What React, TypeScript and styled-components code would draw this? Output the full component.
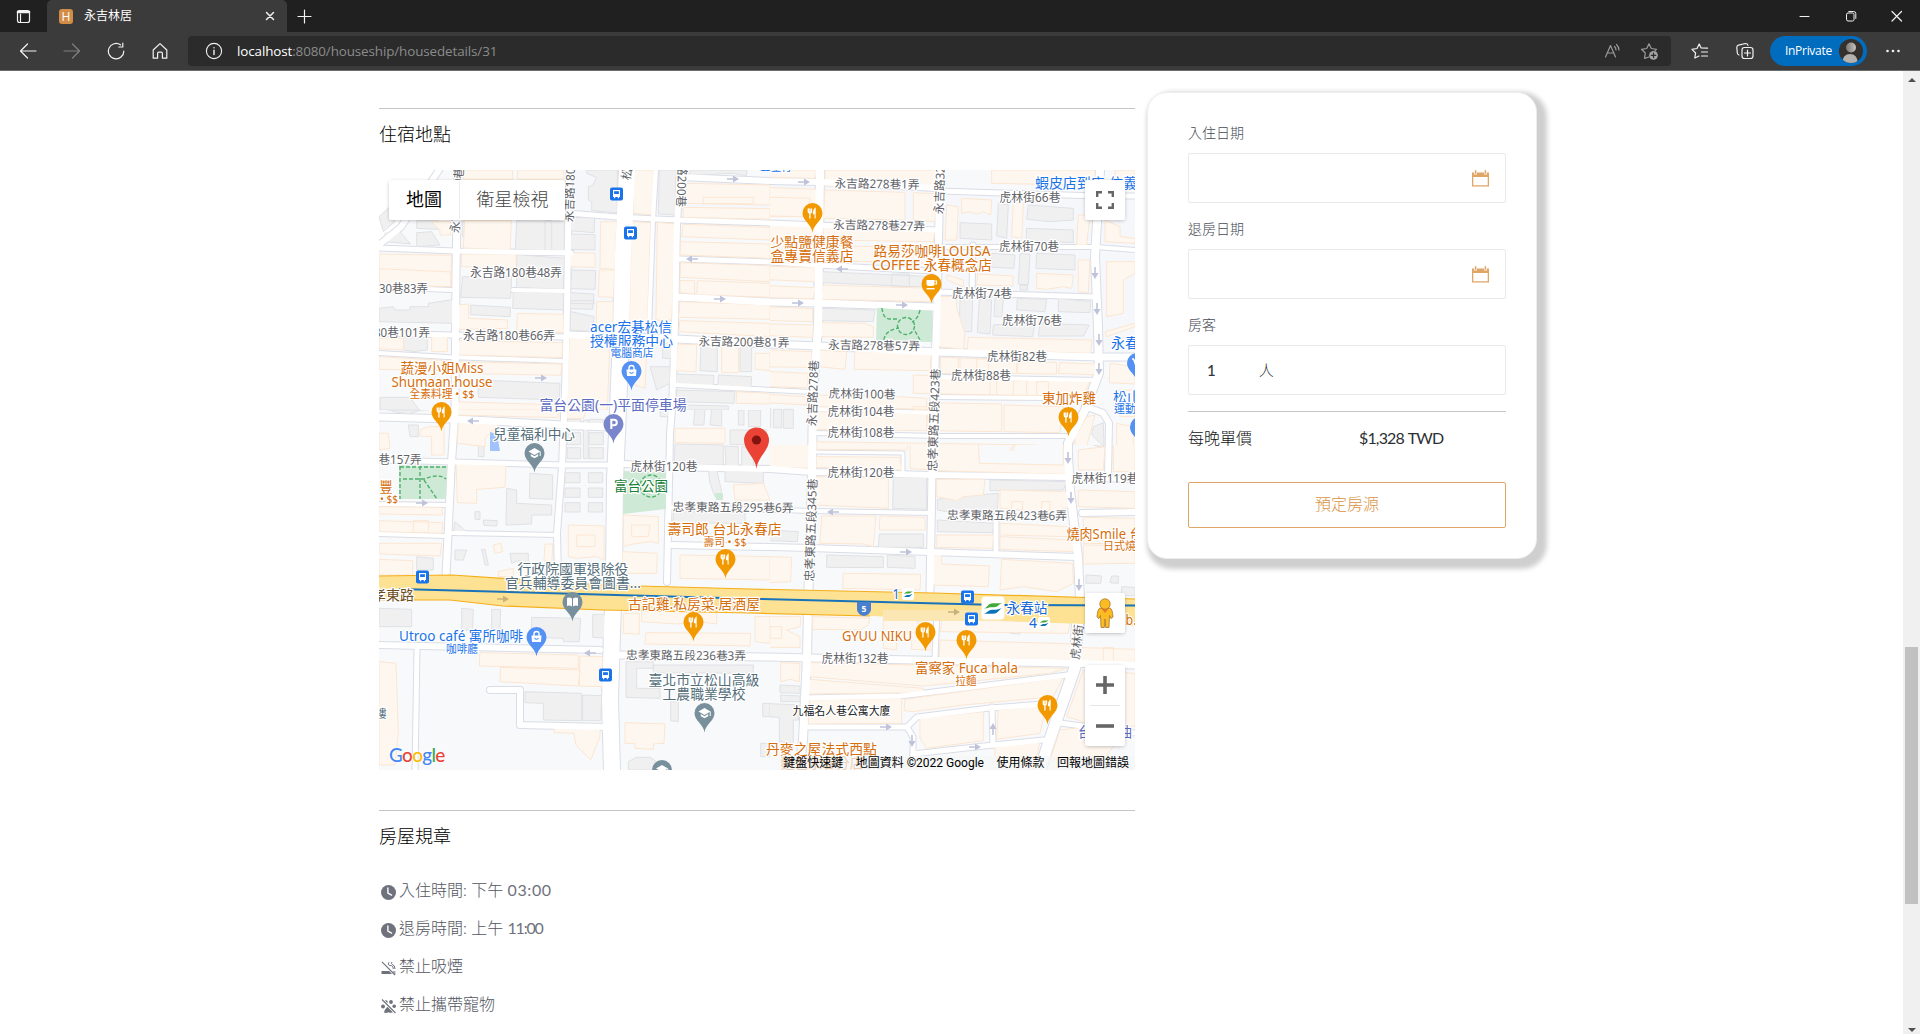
import React from "react";
import styled, { createGlobalStyle, css } from "styled-components";

const GlobalStyle = createGlobalStyle`
  * { box-sizing: border-box; }
  html, body { margin: 0; padding: 0; background: #fff; overflow: hidden; }
`;

const uiFont = `"Open Sans", "Noto Sans CJK TC", sans-serif`;
const pageFont = `Lato, "Noto Sans CJK TC", sans-serif`;

/* ---------- browser frame ---------- */

const Window = styled.div`
  width: 1920px;
  height: 1034px;
  display: flex;
  flex-direction: column;
  background: #fff;
  font-family: ${pageFont};
`;
const TabStrip = styled.div`
  height: 32px;
  flex: none;
  display: flex;
  align-items: center;
  background: #202020;
  color: #fff;
`;
const TabMenu = styled.div`
  width: 47px;
  display: flex;
  justify-content: center;
`;
const Tab = styled.div`
  width: 240px;
  height: 32px;
  padding: 0 10px 0 12px;
  display: flex;
  align-items: center;
  background: #3b3b3b;
  border-radius: 5px 5px 0 0;
  font: 400 12px/16px ${uiFont};
`;
const Favicon = styled.span`
  width: 14px;
  height: 15px;
  margin-right: 11px;
  border-radius: 3px;
  background: #d48d46;
  color: #fff;
  font: 400 12px/15px ${uiFont};
  text-align: center;
`;
const TabTitle = styled.span`
  flex: 1;
`;
const Controls = styled.div`
  margin-left: auto;
  display: flex;
`;
const ControlCell = styled.div`
  width: 46px;
  display: flex;
  justify-content: center;
`;
const Toolbar = styled.div`
  height: 39px;
  flex: none;
  display: flex;
  align-items: center;
  background: #3b3b3b;
  border-bottom: 1px solid #6e6b6d;
  padding: 0 5px 1px 6px;
`;
const ToolCell = styled.div<{ $w?: number }>`
  width: ${(p) => p.$w ?? 44}px;
  flex: none;
  display: flex;
  justify-content: center;
`;
const AddressBar = styled.div`
  width: 1483px;
  height: 30px;
  flex: none;
  margin-left: 6px;
  padding: 0 4px 0 8px;
  display: flex;
  align-items: center;
  background: #2b2b2b;
  border-radius: 4px;
`;
const Url = styled.div`
  flex: 1;
  margin-left: 5px;
  color: #8c8c8c;
  font: 400 13.4px/20px ${uiFont};
  letter-spacing: -0.1px;
  b { color: #fff; font-weight: 400; }
`;
const PrivatePill = styled.div`
  width: 97px;
  height: 30px;
  flex: none;
  margin: 0 2px 0 4px;
  padding: 0 4px 0 15px;
  display: flex;
  align-items: center;
  justify-content: space-between;
  border-radius: 15px;
  background: #006cbe;
  color: #fff;
  font: 400 12px/16px ${uiFont};
  letter-spacing: -0.3px;
`;

const Viewport = styled.div`
  flex: 1;
  min-height: 0;
  display: flex;
`;
const Page = styled.main`
  flex: 1;
  display: flex;
  align-items: flex-start;
  gap: 12px;
  padding-left: 379px;
  overflow: hidden;
`;
const Scrollbar = styled.div`
  width: 17px;
  display: flex;
  flex-direction: column;
  align-items: center;
  background: #f0f0f0;
`;
const ScrollArrow = styled.div<{ $down?: boolean }>`
  width: 0;
  height: 0;
  margin: ${(p) => (p.$down ? "auto 0 2px" : "7px 0 0")};
  border: 4px solid transparent;
  ${(p) =>
    p.$down
      ? css`border-top-color: #505050; border-bottom: 0;`
      : css`border-bottom-color: #505050; border-top: 0;`}
`;
const ScrollThumb = styled.div`
  width: 13px;
  height: 257px;
  margin-top: 565px;
  background: #c1c1c1;
`;

/* ---------- page ---------- */

const Details = styled.section`
  width: 756px;
  flex: none;
`;
const Rule = styled.hr<{ $top: number }>`
  height: 1px;
  margin: ${(p) => p.$top}px 0 0;
  border: 0;
  background: #c6c6c6;
`;
const Heading = styled.h2`
  margin: 12px 0 0;
  font: 300 18px/27px ${pageFont};
  color: #000;
`;
const RuleList = styled.ul`
  list-style: none;
  margin: 21px 0 0;
  padding: 0;
`;
const RuleItem = styled.li`
  height: 38px;
  display: flex;
  align-items: center;
  color: #53565f;
  font: 300 16px/24px ${pageFont};
  svg { flex: none; margin: 4px 3px 0 2px; }
`;
const Time = styled.span<{ $track: number }>`
  font-weight: 400;
  color: #6f727c;
  letter-spacing: ${(p) => p.$track}px;
`;

const Card = styled.aside`
  width: 390px;
  height: 467px;
  flex: none;
  margin-top: 21px;
  padding: 27px 30px 0 40px;
  border: 1px solid #ededed;
  border-radius: 20px;
  background: #fff;
  box-shadow: 5px 5px 5px 5px #cfcfcf;
`;
const FieldLabel = styled.label`
  display: block;
  height: 32px;
  padding-bottom: 1px;
  font: 300 14px/23px ${pageFont};
  color: #484b54;
`;
const Field = styled.div`
  height: 50px;
  margin-bottom: 14px;
  padding: 0 16px 0 18px;
  display: flex;
  align-items: center;
  border: 1px solid #e9e9ea;
  border-radius: 2px;
  color: #33363b;
  font: 500 15px/24px ${pageFont};
  svg { margin-left: auto; }
`;
const Unit = styled.span`
  margin-left: 43px;
  font-weight: 300;
`;
const Fields = styled.div`
  padding-top: 1px;
`;
const PriceRow = styled.div`
  display: grid;
  grid-template-columns: 171px 1fr;
  margin-top: 14px;
  font: 300 16px/24px ${pageFont};
  color: #101214;
  span { font-weight: 400; letter-spacing: -0.85px; color: #2b2f33; word-spacing: 1px; }
`;
const BookButton = styled.button`
  display: block;
  width: 100%;
  height: 46px;
  margin-top: 32px;
  padding: 0 0 3px;
  border: 1px solid #dfa667;
  border-radius: 2px;
  background: #fff;
  color: #d99243;
  font: 300 16px/24px ${pageFont};
`;

/* ---------- map ---------- */

const MapBox = styled.div`
  position: relative;
  width: 756px;
  height: 600px;
  margin-top: 22px;
  overflow: hidden;
  font-family: Roboto, "Noto Sans CJK TC", sans-serif;
`;
const MapSvg = styled.svg`
  display: block;
`;
const MapText = styled.text`
  font-family: "Noto Sans", "Noto Sans CJK TC", sans-serif;
  text-anchor: middle;
  paint-order: stroke;
  stroke: #fff;
  stroke-width: 2.5px;
  stroke-linejoin: round;
`;
const Overlay = styled.div<{ $x: number; $y: number; $w: number; $h: number }>`
  position: absolute;
  left: ${(p) => p.$x}px;
  top: ${(p) => p.$y}px;
  width: ${(p) => p.$w}px;
  height: ${(p) => p.$h}px;
  display: flex;
  align-items: center;
  justify-content: center;
  background: #fff;
  border-radius: 2px;
  box-shadow: 0 1px 4px -1px rgba(0, 0, 0, 0.35);
`;
const MapType = styled.div<{ $on?: boolean; $w: number }>`
  width: ${(p) => p.$w}px;
  font-size: 18px;
  line-height: 38px;
  text-align: center;
  font-weight: ${(p) => (p.$on ? 400 : 300)};
  color: ${(p) => (p.$on ? "#000" : "#454545")};
  & + & { border-left: 1px solid #ececec; }
`;
const ZoomStack = styled.div`
  display: flex;
  flex-direction: column;
  align-items: center;
  div { height: 40px; display: flex; align-items: center; }
  hr { width: 30px; height: 1px; margin: 0; border: 0; background: #e6e6e6; }
`;
const GoogleMark = styled.div`
  position: absolute;
  left: 10px;
  bottom: 2px;
  font: 500 19px/26px Lato, sans-serif;
  letter-spacing: -0.7px;
  text-shadow: 0 0 2px #fff, 0 0 2px #fff;
`;
const Letter = styled.span<{ $c: string }>`
  color: ${(p) => p.$c};
`;
const Attribution = styled.div`
  position: absolute;
  right: 0;
  bottom: 0;
  height: 14px;
  padding: 0 6px 0 5px;
  display: flex;
  gap: 12.5px;
  background: rgba(245, 245, 245, 0.72);
  color: #000;
  font-size: 12px;
  line-height: 14px;
  white-space: nowrap;
`;

type Shape = number[];
const toPath = (s: Shape) => {
  if (s.length === 4) return `M${s[0]} ${s[1]}H${s[2]}V${s[3]}H${s[0]}z`;
  let d = `M${s[0]} ${s[1]}`;
  for (let i = 2; i < s.length; i += 2) d += `L${s[i]} ${s[i + 1]}`;
  return d + "z";
};
const paths = (list: Shape[]) => list.map(toPath).join("");

/* Streets: width followed by the polyline's points */
const streets: Shape[] = [
  [7, 79, 0, 77, 100, 76, 240, 72, 300, 69, 365, 67, 405],
  [6, 190, 0, 188, 140, 186, 220, 183, 297, 178, 363, 179, 406],
  [16, 248, 0, 244, 87, 242, 165, 239, 240, 236, 310, 235, 410, 233, 463, 231, 530, 233, 600],
  [4, 277, 0, 274, 50, 270, 160],
  [6, 301, 0, 298, 55, 296, 155, 293, 240, 291, 263, 289, 363, 288, 412],
  [8, 441, 0, 439, 157, 434, 223, 433, 303, 429, 437, 428, 487, 424, 570, 420, 600],
  [7, 561, 0, 558, 140, 555, 223, 553, 303, 551, 420],
  [5, 558, 440, 556, 488],
  [8, 721, 0, 716, 87, 719, 157, 720, 203, 706, 240, 689, 273, 689, 287, 691, 320, 699, 387, 701, 430],
  [11, 699, 446, 696, 497, 681, 540, 668, 578, 660, 604],
  [5, 594, 75, 593, 125],
  [6, 706, 236, 724, 243, 730, 253, 729, 308],
  [5, 617, 345, 617, 384],
  [5, 0, 78, 76, 81, 192, 83],
  [5, 188, 43, 238, 47, 298, 50, 391, 53, 558, 60],
  [6, 301, 7, 391, 11, 441, 12, 558, 18],
  [5, 560, 21, 720, 26, 756, 26],
  [4, 134, 120, 186, 121],
  [4, 0, 117, 72, 120],
  [5, 301, 89, 391, 92, 437, 95, 554, 101],
  [7, 298, 127, 391, 132, 437, 133, 554, 137],
  [5, 0, 163, 71, 165, 186, 167],
  [7, 191, 165, 298, 169, 391, 174, 439, 176, 558, 182, 718, 187, 756, 187],
  [4, 0, 183, 68, 187, 184, 191],
  [7, 0, 247, 74, 249, 184, 255, 228, 257],
  [5, 0, 290, 75, 292, 183, 295, 228, 295],
  [6, 246, 294, 288, 297, 391, 299, 433, 302, 554, 305, 688, 307, 756, 309],
  [4, 0, 334, 69, 335],
  [4, 73, 363, 178, 365],
  [4, 0, 364, 66, 366],
  [4, 290, 337, 433, 341, 554, 343],
  [6, 703, 343, 756, 342],
  [6, 293, 375, 391, 377, 431, 378, 551, 382, 698, 387],
  [6, 0, 475, 221, 480],
  [7, 239, 485, 391, 487, 431, 488, 688, 493, 756, 495],
  [5, 424, 528, 521, 526, 554, 522, 688, 505],
  [5, 428, 557, 528, 557, 538, 547, 611, 538, 678, 533],
  [5, 528, 557, 534, 567, 534, 600],
  [5, 534, 584, 614, 575, 664, 570],
  [5, 613, 537, 614, 575],
  [5, 681, 553, 756, 563],
  [5, 38, 478, 36, 604],
  [6, 111, 520, 141, 520, 141, 555, 228, 557],
  [4, 568, 77, 717, 77, 756, 80],
  [5, 558, 122, 716, 127],
  [4, 561, 207, 719, 210],
  [4, 297, 215, 433, 222],
  [4, 434, 239, 556, 243],
  [4, 434, 263, 558, 266, 688, 266],
  [4, 558, 227, 678, 228],
  [3, 434, 282, 524, 283, 524, 303],
  [6, 0, 75, 22, 57, 60, 0],
];

interface Tile { at: string; clip: Shape; peach: Shape[]; gray: Shape[]; }

/* Building footprints, drawn per quadrant at three units to the pixel */
const tiles: Tile[] = [
  {
    at: "translate(-9 -80) scale(.33333)",
    clip: [27, 240, 1200, 960],
    peach: [
      [280, 240, 428, 240, 428, 268, 280, 268], [443, 240, 580, 240, 580, 268, 443, 268],
      [284, 392, 424, 392, 420, 480, 280, 474], [27, 492, 244, 496, 242, 590, 27, 586], [27, 536, 244, 546, 242, 590, 27, 586],
      [275, 492, 438, 492, 438, 535, 275, 530], [185, 395, 242, 395, 242, 435, 210, 435, 210, 420],
      [263, 645, 296, 642, 296, 685, 413, 690, 413, 715, 263, 718], [442, 670, 580, 673, 580, 728, 440, 720],
      [262, 752, 578, 758, 576, 803, 262, 795], [27, 745, 100, 745, 100, 780, 27, 776], [185, 740, 232, 785],
      [27, 800, 232, 812, 232, 842, 27, 838], [262, 815, 576, 822, 572, 856, 262, 850],
      [600, 488, 675, 490, 675, 532, 600, 530], [692, 395, 740, 395, 735, 538, 690, 535], [688, 540, 735, 540, 730, 622, 685, 620],
      [680, 635, 730, 635, 728, 735, 678, 730], [598, 745, 720, 748, 712, 960, 590, 960],
      [790, 240, 858, 240, 855, 375, 790, 370], [785, 395, 842, 398, 832, 700, 778, 700], [862, 397, 918, 402, 905, 690, 858, 690],
      [950, 280, 1200, 285, 1200, 345, 945, 340], [940, 352, 1200, 356, 1200, 388, 940, 382], [1000, 322, 1150, 322, 1150, 342, 1000, 340],
      [940, 403, 1200, 412, 1200, 450, 935, 440], [932, 455, 1200, 462, 1200, 505, 930, 495], [932, 518, 1200, 527, 1200, 575, 930, 562],
      [930, 572, 974, 572, 974, 612, 930, 608], [982, 572, 1200, 580, 1200, 622, 980, 614], [930, 635, 1200, 645, 1200, 688, 926, 682],
      [930, 692, 1200, 700, 1200, 740, 926, 725], [922, 762, 980, 764, 978, 845, 918, 842], [1055, 765, 1105, 848],
      [1155, 790, 1200, 790, 1200, 842, 1155, 838], [1100, 905, 1200, 910, 1200, 942, 1098, 940], [780, 785, 830, 785, 825, 895, 780, 880],
      [258, 935, 570, 945, 570, 960, 258, 960],
    ],
    gray: [
      [278, 392, 323, 440], [337, 398, 356, 430], [440, 392, 583, 395, 583, 485, 436, 478], [525, 392, 545, 485],
      [140, 392, 205, 392, 205, 418, 140, 415], [140, 428, 185, 425, 210, 465, 140, 470], [27, 380, 60, 350, 75, 395, 40, 425],
      [45, 430, 90, 425, 122, 462, 45, 455], [605, 382, 674, 384, 672, 428, 600, 422], [602, 432, 675, 434, 675, 480, 600, 478],
      [605, 540, 677, 542, 675, 598, 602, 596], [600, 608, 672, 612, 668, 658, 600, 656], [602, 632, 672, 632, 672, 642, 602, 640],
      [602, 665, 672, 680, 668, 725, 600, 720], [440, 494, 583, 505, 580, 598, 440, 592], [278, 560, 425, 560, 422, 625, 272, 622],
      [430, 605, 580, 607, 580, 660, 428, 655], [302, 645, 422, 652, 420, 680, 302, 674],
      [27, 655, 70, 650, 75, 660, 120, 660, 120, 650, 175, 650, 175, 640, 253, 628, 250, 700, 27, 695],
      [100, 740, 172, 740, 172, 780, 130, 785, 100, 780], [325, 870, 570, 880, 568, 930, 325, 922], [30, 922, 120, 922, 148, 960, 30, 960],
      [868, 240, 918, 240, 915, 375, 865, 372],
      [650, 240, 742, 240, 742, 368, 665, 362, 665, 335, 655, 330, 655, 290, 668, 285, 680, 262, 650, 250],
      [993, 765, 1042, 765, 1042, 845, 990, 842], [1110, 768, 1145, 845], [920, 852, 1032, 856, 1030, 895, 915, 890],
      [1045, 855, 1145, 860, 1142, 905, 1043, 900], [920, 900, 1095, 905, 1092, 940, 918, 935], [878, 750, 905, 805],
      [840, 830, 900, 830, 900, 880, 860, 900], [945, 945, 1075, 948, 1075, 960, 945, 960],
      [960, 240, 1130, 240, 1130, 258, 1090, 250, 960, 256],
    ],
  },
  {
    at: "translate(371 -10) scale(.33333)",
    clip: [60, 30, 1155, 855],
    peach: [
      [0, 30, 203, 30, 195, 55, 0, 50], [225, 30, 560, 30, 558, 85, 225, 78], [0, 80, 205, 88, 205, 170, 0, 168], [0, 110, 180, 115, 175, 170, 0, 168],
      [0, 188, 205, 200, 200, 240, 0, 235], [0, 245, 205, 255, 200, 300, 0, 290], [225, 90, 465, 97, 465, 180, 220, 175],
      [490, 98, 560, 102, 555, 185, 490, 180], [220, 195, 555, 215, 550, 245, 220, 240], [215, 255, 550, 265, 548, 310, 215, 302],
      [0, 318, 195, 322, 195, 365, 0, 357], [0, 375, 195, 383, 190, 416, 0, 412], [0, 438, 188, 446, 188, 485, 0, 480],
      [0, 490, 190, 495, 188, 532, 0, 525], [218, 375, 548, 385, 545, 425, 212, 418], [208, 488, 345, 490, 370, 500, 370, 532, 208, 530],
      [570, 410, 620, 410, 620, 445, 645, 520, 640, 568, 565, 560], [655, 532, 1025, 540, 1022, 580, 652, 570],
      [10, 568, 185, 575, 182, 622, 8, 620], [15, 632, 175, 640, 172, 684, 12, 678], [205, 570, 290, 575, 285, 628, 205, 620],
      [315, 575, 545, 575, 540, 632, 312, 628], [572, 592, 800, 600, 800, 640, 572, 640], [625, 592, 630, 640], [680, 596, 715, 640],
      [805, 605, 920, 607, 920, 643, 800, 640], [930, 608, 1038, 612, 1038, 645, 925, 640],
      [490, 645, 1020, 662, 1000, 705, 920, 708, 490, 700], [720, 660, 740, 705], [790, 662, 830, 706], [860, 665, 895, 707],
      [200, 705, 445, 710, 530, 715, 530, 748, 195, 740], [0, 700, 170, 710, 170, 735, 0, 725],
      [635, 115, 725, 120, 722, 165, 700, 155, 680, 162, 660, 155, 635, 160], [590, 135, 625, 140, 620, 240, 585, 240], [790, 130, 820, 130, 815, 235, 785, 230],
      [985, 165, 1020, 165, 1010, 255, 980, 255], [860, 340, 970, 345, 965, 385, 940, 380, 890, 388, 860, 385], [985, 300, 1020, 300, 1015, 398, 985, 395],
      [683, 342, 790, 348, 788, 378, 680, 375], [1070, 305, 1155, 305, 1155, 340, 1120, 360, 1120, 460, 1070, 470],
      [1065, 180, 1110, 200, 1110, 230, 1155, 235, 1155, 250, 1065, 245], [1095, 30, 1155, 30, 1155, 60, 1095, 60], [725, 30, 1035, 30, 1035, 76, 725, 70],
      [195, 755, 530, 762, 530, 812, 195, 808], [200, 845, 860, 855, 860, 870, 200, 870], [535, 728, 755, 732, 755, 815, 530, 812],
      [762, 735, 940, 740, 930, 818, 762, 815], [1080, 610, 1155, 620, 1155, 672, 1078, 668], [590, 345, 640, 360, 640, 380, 592, 360],
      [1095, 690, 1155, 690, 1155, 770, 1110, 770], [1100, 790, 1150, 800, 1150, 860, 1100, 860], [975, 830, 1010, 770, 1035, 765, 1010, 860, 975, 860],
      [490, 740, 530, 740, 530, 752, 490, 750], [1065, 515, 1155, 490, 1155, 500, 1070, 530],
    ],
    gray: [
      [218, 335, 550, 350, 545, 382, 215, 368], [425, 342, 478, 380], [210, 445, 375, 450, 370, 485, 208, 482],
      [745, 130, 775, 135, 770, 235, 740, 228], [835, 135, 970, 145, 970, 180, 900, 185, 830, 178], [630, 188, 725, 192, 725, 240, 630, 235],
      [830, 205, 970, 210, 970, 248, 828, 242], [725, 280, 795, 285, 792, 325, 725, 322], [810, 280, 840, 283, 835, 375, 805, 372],
      [860, 280, 975, 285, 975, 330, 858, 325], [630, 415, 668, 415, 665, 515, 628, 515], [688, 418, 725, 420, 720, 522, 682, 518],
      [735, 415, 760, 415, 755, 470, 732, 470], [802, 415, 890, 418, 885, 455, 800, 450], [925, 415, 1022, 425, 1020, 458, 925, 455],
      [730, 495, 855, 485, 848, 530, 728, 525], [870, 490, 1018, 495, 1000, 528, 865, 528], [38, 745, 62, 803], [70, 748, 95, 803], [100, 748, 130, 805],
      [1030, 800, 1060, 788, 1062, 860, 1025, 825], [810, 376, 832, 390],
    ],
  },
  {
    at: "translate(-9 230) scale(.33333)",
    clip: [27, 30, 1200, 1110],
    peach: [
      [260, 0, 565, 12, 565, 53, 258, 45], [265, 65, 390, 70, 360, 100, 345, 115, 345, 140, 262, 130],
      [175, 80, 222, 80, 222, 165, 185, 165, 185, 110, 150, 108, 150, 90], [27, 100, 55, 100, 60, 145, 27, 150],
      [258, 190, 408, 198, 405, 262, 320, 268, 320, 310, 262, 308], [27, 320, 215, 322, 218, 345, 27, 342], [27, 362, 218, 368, 215, 400, 27, 395],
      [130, 362, 175, 398], [27, 430, 215, 430, 210, 468, 27, 462], [27, 478, 128, 482, 128, 525, 27, 525],
      [595, 375, 702, 378, 702, 480, 680, 470, 620, 475, 595, 470], [620, 405, 675, 405, 675, 440, 620, 440],
      [760, 345, 865, 350, 865, 430, 840, 425, 790, 432, 760, 440], [785, 375, 840, 375, 835, 410, 785, 410],
      [758, 455, 862, 460, 860, 520, 755, 520], [930, 465, 1200, 470, 1200, 540, 930, 535], [370, 435, 392, 430, 398, 455, 375, 460],
      [525, 432, 548, 432, 546, 485, 522, 482], [385, 515, 430, 505, 430, 530, 385, 530], [760, 640, 808, 640, 808, 703, 760, 700],
      [815, 625, 1040, 630, 1040, 672, 985, 665, 920, 672, 815, 665], [828, 698, 1142, 700, 1140, 738, 825, 732], [1155, 650, 1200, 650, 1200, 730, 1155, 725],
      [330, 758, 625, 765, 625, 805, 328, 798], [630, 768, 698, 770, 698, 860, 628, 858], [392, 802, 630, 810, 625, 858, 390, 845],
      [27, 785, 78, 790, 85, 1000, 75, 1095, 27, 1095], [552, 975, 690, 980, 690, 1010, 662, 1080, 618, 1035, 612, 1000, 552, 998],
      [765, 968, 885, 972, 882, 1030, 850, 1032, 850, 1048, 795, 1045, 795, 1030, 765, 1030], [915, 85, 1065, 85, 1065, 130, 915, 128],
      [1090, 255, 1180, 250, 1200, 300, 1095, 300], [590, 30, 650, 30, 640, 55, 590, 55],
    ],
    gray: [
      [115, 75, 145, 75, 145, 110, 120, 110], [40, 20, 50, 30, 175, 30, 170, 25, 115, 42, 70, 35], [325, 105, 342, 105, 342, 170, 325, 170],
      [480, 220, 548, 225, 548, 298, 478, 295], [410, 265, 440, 270, 440, 310, 545, 315, 545, 345, 485, 345, 485, 372, 408, 375],
      [315, 335, 330, 358], [340, 360, 382, 362, 380, 378, 342, 376], [255, 365, 290, 395, 270, 408, 250, 400],
      [255, 450, 290, 450, 280, 480, 255, 480], [335, 448, 345, 448, 355, 495, 345, 495], [420, 460, 475, 460, 475, 495, 450, 495, 450, 480, 425, 490],
      [140, 470, 190, 475, 190, 510, 140, 510], [592, 58, 632, 90], [657, 58, 700, 90], [592, 98, 632, 134], [657, 98, 700, 134], [592, 143, 632, 176], [657, 143, 700, 176],
      [585, 218, 630, 248], [655, 218, 698, 248], [585, 264, 630, 292], [655, 264, 698, 292], [585, 308, 630, 336], [655, 308, 698, 336],
      [640, 60, 655, 175], [915, 132, 1060, 135, 1060, 195, 912, 195], [1080, 90, 1190, 90, 1190, 135, 1080, 133], [1065, 138, 1105, 140, 1105, 200, 1068, 198], [1115, 140, 1150, 200],
      [975, 25, 1005, 25, 1002, 75, 970, 75], [1025, 25, 1055, 25, 1055, 78, 1020, 75], [1105, 30, 1122, 75], [1135, 30, 1172, 80], [870, 20, 900, 50],
      [912, 335, 1125, 338, 1125, 370, 908, 368], [1065, 212, 1180, 215, 1180, 250, 1065, 245], [1015, 210, 1040, 210, 1055, 275, 1035, 290, 1020, 250],
      [27, 625, 125, 628, 125, 680, 27, 680], [275, 625, 310, 628, 308, 690, 275, 690], [365, 628, 392, 628, 390, 690, 365, 690],
      [485, 652, 632, 655, 628, 725, 580, 725, 580, 715, 485, 712], [668, 643, 718, 643, 718, 715, 668, 712],
      [465, 875, 635, 880, 635, 962, 520, 960, 520, 910, 465, 908], [638, 885, 695, 887, 692, 962, 638, 962],
      [768, 785, 850, 785, 850, 805, 800, 805, 800, 865, 870, 865, 870, 895, 768, 892], [850, 795, 1150, 795, 1150, 820, 850, 818],
      [902, 905, 925, 905, 925, 965, 902, 962], [1178, 910, 1200, 910, 1200, 950, 1178, 950], [775, 1110, 775, 1085, 800, 1072, 840, 1072, 860, 1085, 850, 1110],
      [1172, 1030, 1200, 1030, 1200, 1070, 1172, 1070],
    ],
  },
  {
    at: "translate(371 270) scale(.33333)",
    clip: [60, 15, 1155, 990],
    peach: [
      [0, 0, 180, 0, 180, 85, 0, 80], [200, 0, 478, 0, 470, 30, 200, 28], [200, 50, 450, 52, 455, 90, 198, 82], [480, 0, 940, 0, 950, 103, 560, 92, 480, 85],
      [685, 0, 688, 70, 940, 75, 940, 0], [560, 118, 705, 118, 700, 165, 640, 170, 620, 182, 560, 170], [750, 150, 960, 155, 960, 200, 905, 218, 750, 205], [785, 185, 818, 210], [875, 185, 900, 210],
      [195, 110, 415, 115, 415, 205, 195, 195], [215, 228, 378, 228, 370, 320, 340, 312, 210, 310], [390, 228, 525, 232, 525, 270, 388, 270],
      [750, 250, 960, 260, 955, 290, 750, 285], [560, 285, 730, 285, 728, 325, 560, 322], [750, 290, 970, 300, 970, 335, 750, 328],
      [1000, 232, 1155, 235, 1155, 312, 1000, 310], [1000, 315, 1155, 318, 1155, 370, 1000, 372], [57, 350, 125, 352, 122, 425, 57, 428],
      [280, 400, 512, 403, 510, 450, 278, 445], [545, 345, 575, 345, 575, 372, 718, 378, 715, 440, 540, 435], [755, 358, 968, 370, 970, 430, 920, 455, 820, 440, 750, 450],
      [985, 30, 1065, 20, 1060, 90, 985, 90], [985, 150, 1155, 155, 1155, 205, 985, 200], [1090, 0, 1155, 0, 1155, 95, 1090, 95],
      [15, 530, 152, 530, 150, 560, 110, 570, 150, 590, 150, 622, 15, 622], [60, 560, 95, 595], [188, 530, 360, 535, 355, 555, 330, 570, 188, 568], [162, 615, 182, 650],
      [400, 512, 535, 515, 535, 540, 500, 545, 540, 580, 540, 630, 485, 628, 485, 600, 440, 600, 440, 630, 400, 625],
      [570, 600, 975, 612, 970, 660, 568, 652], [975, 622, 1155, 628, 1155, 665, 975, 662], [1060, 622, 1090, 665], [575, 540, 960, 545, 955, 580, 572, 575],
      [180, 668, 950, 685, 900, 700, 520, 738, 175, 710], [178, 718, 520, 745, 520, 758, 175, 762], [178, 780, 455, 775, 455, 850, 175, 852],
      [465, 778, 940, 712, 910, 770, 640, 795, 490, 815, 462, 812], [510, 835, 700, 815, 700, 902, 530, 925, 510, 895],
      [745, 810, 890, 792, 870, 880, 740, 898], [735, 915, 870, 905, 860, 950, 735, 955], [92, 668, 150, 670, 148, 725, 120, 718, 92, 725],
      [950, 830, 1000, 690, 1155, 700, 1155, 860, 1000, 845], [930, 870, 1000, 862, 1120, 880, 1060, 960, 900, 960], [500, 930, 510, 960, 495, 960, 495, 930],
      [780, 30, 800, 0, 790, 30],
    ],
    gray: [
      [430, 112, 530, 112, 530, 208, 428, 205], [720, 120, 950, 125, 940, 150, 720, 152], [562, 178, 680, 165, 745, 160, 742, 210, 590, 215, 562, 210],
      [562, 240, 730, 250, 728, 278, 562, 275], [388, 282, 520, 282, 520, 322, 385, 322], [230, 345, 400, 350, 400, 383, 230, 382],
      [412, 345, 495, 350, 495, 385, 412, 382], [57, 270, 145, 275, 142, 305, 57, 302], [1008, 405, 1055, 408, 1052, 430, 1008, 430], [1085, 408, 1105, 408, 1105, 430, 1080, 428],
      [1115, 440, 1155, 442, 1155, 468, 1115, 466], [780, 530, 812, 532, 810, 582, 780, 580], [90, 735, 150, 738, 150, 760, 90, 758], [92, 765, 150, 768, 150, 785, 92, 785],
      [38, 790, 148, 795, 145, 840, 130, 840, 130, 910, 88, 905, 88, 832, 38, 830], [1030, 0, 1062, 0, 1060, 22, 1030, 15], [1120, 760, 1145, 790],
    ],
  },
];

const arrows: [number, number, number, string?][] = [
  [354, 9, 0], [313, 89, 180], [341, 129, 0], [162, 208, 0], [425, 12, 0], [463, 99, 180], [419, 133, 0], [523, 135, 0],
  [716, 103, 90], [718, 139, 90], [720, 170, 90], [720, 199, 90], [689, 288, 90], [94, 251, 180], [43, 333, 0],
  [124, 429, 0, "#c9b27a"], [211, 483, 180], [454, 342, 180], [527, 382, 0], [692, 328, 90], [700, 415, 90],
  [575, 442, 0, "#c9b27a"], [507, 557, 0], [533, 571, 90], [614, 559, -90], [596, 577, 0],
];

const busStops = [[237.5, 24], [251.5, 63], [43.5, 407], [226.5, 505], [588.5, 427], [592.5, 449]];

type Glyph = "food" | "cup" | "bag" | "P" | "cap" | "book" | "dot";
const pins: [number, number, Glyph][] = [
  [433.5, 43, "food"], [689.5, 247, "food"], [62.5, 242, "food"], [346.5, 389, "food"], [314.5, 452, "food"], [546.5, 462, "food"],
  [587.5, 470, "food"], [668.5, 535, "food"], [552.5, 114, "cup"], [252.5, 201, "bag"], [157.5, 467, "bag"], [758, 193, "dot"],
  [761, 257, "dot"], [234.5, 254, "P"], [155.5, 283, "cap"], [325.5, 543, "cap"], [193.5, 432, "book"], [283, 600, "cap"],
];
const pinColor: Record<Glyph, string> = {
  food: "#f29900", cup: "#f29900", bag: "#5491f5", dot: "#5491f5", P: "#7986cb", cap: "#78909c", book: "#78909c",
};

type Tone = "road" | "food" | "shop" | "park" | "green" | "civic" | "station" | "black" | "main";
const tone: Record<Tone, { fill: string; size: number }> = {
  road: { fill: "#5f6368", size: 12 },
  food: { fill: "#d56e0c", size: 14 },
  shop: { fill: "#1a73e8", size: 14 },
  park: { fill: "#5c6bc0", size: 14 },
  green: { fill: "#188038", size: 13.5 },
  civic: { fill: "#546e7a", size: 13.8 },
  station: { fill: "#1967d2", size: 13.8 },
  black: { fill: "#202124", size: 11 },
  main: { fill: "#6d4c1d", size: 14 },
};

/* text, centre x, centre y, width, tone, rotation, size */
type Label = [string, number, number, number, Tone, number?, number?];
const labels: Label[] = [
  ["永吉路180巷48弄", 137, 103, 92, "road"],
  ["30巷83弄", 24.5, 119, 49, "road"],
  ["80巷101弄", 23, 163, 56, "road"],
  ["永吉路180巷66弄", 130, 166, 92, "road"],
  ["永吉路200巷81弄", 365, 172, 91, "road", 1],
  ["永吉路278巷1弄", 498, 14, 85, "road", 1],
  ["永吉路278巷27弄", 500, 55.5, 92, "road", 1],
  ["永吉路278巷57弄", 495, 175.5, 92, "road", 1],
  ["虎林街66巷", 651, 27.5, 61, "road"],
  ["虎林街70巷", 650, 77, 60, "road"],
  ["虎林街74巷", 603, 124, 60, "road"],
  ["虎林街76巷", 653, 150.5, 60, "road"],
  ["虎林街82巷", 638, 186.5, 60, "road"],
  ["虎林街88巷", 602, 206, 60, "road"],
  ["虎林街100巷", 483, 224, 67, "road", 1],
  ["虎林街104巷", 482, 241.5, 67, "road"],
  ["虎林街108巷", 482, 263, 67, "road"],
  ["巷157弄", 21, 290, 43, "road"],
  ["虎林街120巷", 285, 297, 67, "road"],
  ["虎林街120巷", 482, 302.5, 67, "road"],
  ["虎林街119巷", 726, 309, 67, "road"],
  ["忠孝東路五段295巷6弄", 354, 337.5, 121, "road", 0.5],
  ["忠孝東路五段423巷6弄", 628, 345.5, 120, "road", 0.5],
  ["忠孝東路五段236巷3弄", 307, 485.5, 120, "road", 0.5],
  ["虎林街132巷", 476, 489, 67, "road"],
  ["永吉路278巷", 434, 223, 66, "road", -88],
  ["忠孝東路五段345巷", 432, 360, 103, "road", -88],
  ["忠孝東路五段423巷", 555, 250, 103, "road", -88],
  ["永吉路326巷", 561, 11, 66, "road", -88],
  ["永吉路180巷", 191, 19, 66, "road", -88],
  ["永吉路150巷", 78, 30, 66, "road", -86],
  ["永吉路200巷", 303, 4, 66, "road", 92],
  ["虎林街", 698, 472, 35, "road", -83],
  ["松", 248, 4, 12, "road", -78],
  ["樓", 2, 544, 11, "civic", 0, 11],
  ["九福名人巷公寓大廈", 462.5, 541.5, 98, "black"],
  ["忠孝東路", 7, 425, 56, "main"],
  ["蔬漫小姐Miss", 63, 198, 83, "food"],
  ["Shumaan.house", 63, 212, 101, "food"],
  ["全素料理 • $$", 63, 224, 65, "food", 0, 11],
  ["少點鹽健康餐", 433, 72, 83, "food"],
  ["盒專賣信義店", 433, 86, 83, "food"],
  ["路易莎咖啡LOUISA", 553, 81, 117, "food"],
  ["COFFEE 永春概念店", 553, 95, 120, "food"],
  ["東加炸雞", 690, 228, 54, "food"],
  ["豐", 7, 317, 13, "food"],
  ["• $$", 10, 329, 18, "food", 0, 11],
  ["壽司郎 台北永春店", 345.5, 359, 114, "food"],
  ["壽司 • $$", 346, 372, 43, "food", 0, 11],
  ["古記雞.私房菜.居酒屋", 315, 434, 132, "food"],
  ["GYUU NIKU", 498, 466, 70, "food"],
  ["富察家 Fuca hala", 587.5, 498, 103, "food"],
  ["拉麵", 587, 511, 21, "food", 0, 11],
  ["丹麥之屋法式西點", 442.5, 579, 111, "food"],
  ["麵包永春分店", 443, 593, 83, "food"],
  ["燒肉Smile 台北", 732, 364, 89, "food"],
  ["日式燒肉", 746, 376, 44, "food", 0, 11],
  ["b.", 752, 450, 11, "food"],
  ["acer宏碁松信", 252, 157, 82, "shop"],
  ["授權服務中心", 252.5, 171, 83, "shop"],
  ["電腦商店", 253, 183, 43, "shop", 0, 11],
  ["蝦皮店到店-信義", 707, 13, 102, "shop"],
  ["五金行", 397, -3, 32, "shop", 0, 11],
  ["永春", 746, 173, 28, "shop"],
  ["松山", 748, 227, 28, "shop"],
  ["運動", 746, 239, 22, "shop", 0, 11],
  ["Utroo café 寓所咖啡", 82, 466, 124, "shop"],
  ["咖啡廳", 83, 479, 32, "shop", 0, 11],
  ["富台公園(一)平面停車場", 234, 235.5, 147, "park"],
  ["台灣中油", 726, 562, 54, "park"],
  ["兒童福利中心", 155, 264, 82, "civic"],
  ["行政院國軍退除役", 194, 399, 111, "civic"],
  ["官兵輔導委員會圖書...", 194, 413, 136, "civic"],
  ["臺北市立松山高級", 325, 510, 111, "civic"],
  ["工農職業學校", 325, 524.5, 83, "civic"],
  ["富台公園", 262, 316, 54, "green"],
  ["永春站", 648, 438, 41, "station"],
  ["1", 517, 424, 7, "station"],
  ["4", 654, 453, 8, "station"],
];

function PinGlyph({ kind }: { kind: Glyph }) {
  switch (kind) {
    case "food":
      return (
        <g stroke="#fff" strokeLinecap="round" fill="#fff">
          <path d="M-4.2-4V-1.5Q-4.2 0-2.6 0T-1-1.5V-4M-2.6-4V5" fill="none" strokeWidth="1.3" />
          <path d="M2.6 5V-4.6Q.8-3 .9.6H2.6" strokeWidth="1.1" />
        </g>
      );
    case "cup":
      return (
        <g fill="#fff">
          <path d="M-5-4H3V-.5Q3 2 .5 2H-2.5Q-5 2-5-.5z" />
          <path d="M3-3H5V0H3" fill="none" stroke="#fff" strokeWidth="1.2" />
          <rect x="-5" y="4" width="8" height="1.4" />
        </g>
      );
    case "bag":
      return (
        <g>
          <path d="M-5-1.5H5L4.5 5H-4.5z" fill="#fff" />
          <path d="M-2.5-1V-3A2.5 2.5 0 0 1 2.5-3V-1" fill="none" stroke="#fff" strokeWidth="1.4" />
          <path d="M-2 1Q0 3.6 2 1" fill="none" stroke="#5491f5" strokeWidth="1.1" />
        </g>
      );
    case "P":
      return <path d="M-2.2 5V-4.2H.6A2.7 2.7 0 0 1 .6 1.2H-2.2" fill="none" stroke="#fff" strokeWidth="2" />;
    case "cap":
      return (
        <g fill="#fff">
          <path d="M-6-1.5L0-5 6-1.5 0 2z" />
          <path d="M-3.7 1V3.2L0 5.3 3.7 3.2V1L0 3.2zM5.2-1.5H6.2V3H5.2z" />
        </g>
      );
    case "book":
      return <path d="M-.5-3.5Q-3-5-5.5-4V4Q-3 3-.5 4.5zM.5-3.5Q3-5 5.5-4V4Q3 3 .5 4.5z" fill="#fff" />;
    default:
      return <path d="M-5-4H-3.5L-1.5 1.5H4L5-2.5H-2.5" fill="none" stroke="#fff" strokeWidth="1.4" />;
  }
}

function StationMark({ x, y, s }: { x: number; y: number; s: number }) {
  return (
    <g transform={`translate(${x} ${y})`}>
      <rect x={-s / 2} y={-s / 2} width={s} height={s} rx={s / 6} fill="#fff" />
      <g transform={`scale(${s / 24})`}>
        <path d="M-10 .5C-6 .5-6-5 0-5H10C6-4.5 5-.8 1-.8H-3C-5-.8-6 .8-10 .5z" fill="#43a838" />
        <path d="M10 .5C6 .5 6 6 0 6H-10C-6 5.500-5 1.800-1 1.800H3C5 1.800 6 .2 10 .5z" fill="#0a74b8" />
      </g>
    </g>
  );
}

function StreetMap() {
  const line = (s: Shape) => "M" + s.slice(1).join(" ");
  return (
    <MapSvg width="756" height="600" viewBox="0 0 756 600">
      <rect width="756" height="600" fill="#f8f9fb" />
      <path d="M560 26H756V190H560zM300 10H560V50L300 42zM190 0H300V240H190z" fill="#f5f7fb" />
      <path d="M0 0H58L22 55 0 72z" fill="#fff" />
      <g fill="none" stroke="#dadde6" strokeLinejoin="round" strokeLinecap="round">
        {streets.map((s, i) => <path key={i} d={line(s)} strokeWidth={s[0] + 2} />)}
      </g>
      {tiles.map((t, i) => (
        <g key={i} transform={t.at} clipPath={`url(#quad${i})`} strokeWidth="3">
          <clipPath id={`quad${i}`}><path d={toPath(t.clip)} /></clipPath>
          <path d={paths(t.gray)} fill="#f0f0f1" stroke="#e0e1e4" />
          <path d={paths(t.peach)} fill="#fef7f0" stroke="#fbe6d1" />
        </g>
      ))}
      <g fill="none" stroke="#fff" strokeLinejoin="round" strokeLinecap="round">
        {streets.map((s, i) => <path key={i} d={line(s)} strokeWidth={s[0]} />)}
      </g>

      <g fill="#ceead6">
        <path d="M498 138L553 141V172L497 171zM20 295L68 296 67 329H20zM245 301L287 302V339L244 344zM336 323H344V330H337z" />
      </g>
      <path d="M111 262L118 264 121 281H111z" fill="#a1c2fa" />
      <g fill="none" stroke="#4fb06c" strokeWidth="1.4" strokeDasharray="4 2">
        <path d="M503 138Q504 149 511 149H519M541 140Q539 149 533 152M505 170Q506 160 520 158M541 170L536 161" />
        <circle cx="527" cy="156" r="8.5" />
        <path d="M21 296V329M21 297H67M41 296V329M24 309H45Q60 303 67 309M45 310L58 329" />
        <circle cx="272" cy="316" r="11" />
      </g>

      <path d="M0 406L73 405 224 415 371 419 554 423 756 429V456L491 446 371 443 224 440 124 436 71 430H0z" fill="#fde293" />
      <path d="M504 440H620V451H504z" fill="#fbe7b4" />
      <g fill="none" stroke="#f5ae1a" strokeWidth="1.2">
        <path d="M0 406L73 405 224 415 371 419 554 423 756 429M0 430H71L124 436 224 440 371 443 491 446" />
      </g>
      <path d="M20 419L381 429 620 435 756 435.500" fill="none" stroke="#1a73b8" strokeWidth="2" />

      {arrows.map(([x, y, r, c], i) => (
        <path key={i} transform={`translate(${x} ${y}) rotate(${r})`} d="M-6-.8H0V-3.6L6 0 0 3.6V.8H-6z" fill={c ?? "#bfc3d9"} />
      ))}

      <path d="M478 432H492V440Q491 445 485 446 479 445 478 440z" fill="#4a7fd0" />
      <text x="485" y="442" fill="#fff" fontSize="8.5" fontWeight="700" textAnchor="middle" fontFamily="Noto Sans, sans-serif">5</text>

      {busStops.map(([x, y], i) => (
        <g key={i} transform={`translate(${x} ${y})`}>
          <rect x="-6.5" y="-6.5" width="13" height="13" rx="2" fill="#1a73e8" />
          <path d="M-3.5-4H3.5V3H2.5V4.3H1.3V3H-1.3V4.3H-2.5V3H-3.5z" fill="#fff" />
          <path d="M-2.4-2.8H2.4V0H-2.4z" fill="#1a73e8" />
        </g>
      ))}
      <StationMark x={614} y={438} s={23} />
      <StationMark x={529} y={424} s={12} />
      <StationMark x={665} y={453} s={12} />

      {labels.map(([t, x, y, w, k, r = 0, size], i) => {
        const fs = size ?? tone[k].size;
        return (
          <MapText
            key={i}
            transform={`translate(${x} ${y}) rotate(${r})`}
            y={fs * 0.35}
            fontSize={fs}
            fill={tone[k].fill}
            textLength={w}
            lengthAdjust="spacingAndGlyphs"
          >
            {t}
          </MapText>
        );
      })}

      {pins.map(([x, y, k], i) => (
        <g key={i} transform={`translate(${x} ${y})`}>
          <path d="M0 19.5C-1 11-10 8-10 0A10 10 0 0 1 10 0C10 8 1 11 0 19.5z" fill={pinColor[k]} />
          <PinGlyph kind={k} />
        </g>
      ))}
      <g transform="translate(377.5 270)">
        <path d="M0 29C-1 17-12.500 11-12.500 0A12.500 12.500 0 0 1 12.500 0C12.500 11 1 17 0 29z" fill="#ea4335" />
        <circle r="4.6" fill="#811411" />
      </g>
    </MapSvg>
  );
}

/* ---------- icons ---------- */

interface StrokeProps { d: string; w?: number; h?: number; color?: string; sw?: number; children?: React.ReactNode; }
const Stroke = ({ d, w = 18, h = 18, color = "#f2f2f2", sw = 1.2, children }: StrokeProps) => (
  <svg width={w} height={h} viewBox={`0 0 ${w} ${h}`} fill="none" stroke={color} strokeWidth={sw} strokeLinecap="round" strokeLinejoin="round">
    <path d={d} />
    {children}
  </svg>
);
const Calendar = () => (
  <svg width="17" height="17" viewBox="0 0 17 17" fill="#dfa667">
    <path d="M0 2.5H2.2V4.5H4.8V2.5H12.2V4.5H14.8V2.5H17V16.5H0zM1.3 7V15.2H15.7V7z" fillRule="evenodd" />
    <rect x="2.9" y="0" width="1.4" height="3.8" rx=".6" />
    <rect x="12.7" y="0" width="1.4" height="3.8" rx=".6" />
  </svg>
);
const Clock = () => (
  <svg width="15" height="15" viewBox="0 0 15 15">
    <circle cx="7.5" cy="7.5" r="7.5" fill="#6f727c" />
    <path d="M6.9 3V8L10.6 10.1" fill="none" stroke="#fff" strokeWidth="1.4" strokeLinecap="round" />
  </svg>
);
const NoSmoking = () => (
  <svg width="15" height="15" viewBox="0 0 15 15" fill="#6f727c">
    <path d="M.5 10H8.2L11 13H.5z" />
    <path d="M11.8 10H12.6V13L11.8 12.2zM13.4 10H14.3V13.2H13.4z" />
    <path d="M8 1.2Q6.5 3 8.4 4.6H10.5Q12.3 5 12.3 8M11 1Q9.8 2.6 11.2 3.4 14 4 14 8" fill="none" stroke="#6f727c" strokeWidth="1" />
    <path d="M1 .8L14 14" stroke="#6f727c" strokeWidth="1.1" />
  </svg>
);
const NoPets = () => (
  <svg width="15" height="15" viewBox="0 0 15 15" fill="#6f727c">
    <circle cx="2" cy="7.5" r="1.9" />
    <circle cx="5" cy="3" r="1.7" />
    <circle cx="10" cy="3" r="1.9" />
    <circle cx="13.2" cy="7.2" r="1.8" />
    <path d="M3 13.5Q3.2 11 6 8.2 8 6.5 10 9L12.5 13Q10 14.5 7.5 13.2 5 14.5 3 13.5z" />
    <path d="M1 .5L14.5 14" stroke="#fff" strokeWidth="2.6" />
    <path d="M1 .5L14.5 14" stroke="#6f727c" strokeWidth="1.1" />
  </svg>
);
const Pegman = () => (
  <svg width="18" height="31" viewBox="0 0 18 31" stroke="#a9762c" strokeWidth=".8">
    <path d="M4 10H14Q16.5 11 17 19L15 20.5 13.5 17.5 13 29.5H9.7L9 21 8.3 29.5H5L4.5 17.5 3 20.5 1 19Q1.5 11 4 10z" fill="#fbbc22" />
    <path d="M4.8 10H13.2L9 15z" fill="#e8792b" stroke="none" />
    <circle cx="9" cy="6" r="5.2" fill="#fbbc22" />
  </svg>
);

export default function App() {
  return (
    <Window>
      <GlobalStyle />
      <TabStrip>
        <TabMenu>
          <Stroke d="M1.5 3.5Q1.5 1.5 3.5 1.5H11.5Q13.5 1.5 13.5 3.5V11.5Q13.5 13.5 11.5 13.5H3.5Q1.5 13.5 1.5 11.5zM4.5 5V13.5" w={15} h={15}>
            <path d="M2 3H13" strokeWidth="2.6" />
          </Stroke>
        </TabMenu>
        <Tab>
          <Favicon>H</Favicon>
          <TabTitle>永吉林居</TabTitle>
          <Stroke d="M3.5 3.5L10.5 10.5M10.5 3.5L3.5 10.5" w={14} h={14} sw={1.5} />
        </Tab>
        <Stroke d="M17.5 2V15M11 8.5H24" w={34} h={17} />
        <Controls>
          <ControlCell><Stroke d="M4 9.5H13" sw={1} /></ControlCell>
          <ControlCell>
            <Stroke d="M4.5 7.5Q4.5 6 6 6H10.5Q12 6 12 7.5V12.5Q12 14 10.5 14H6Q4.5 14 4.5 12.5zM6.8 4.5H11.5Q13.8 4.5 13.8 6.5V11.5" sw={1} />
          </ControlCell>
          <ControlCell><Stroke d="M4 4.5L13.5 14M13.5 4.5L4 14" /></ControlCell>
        </Controls>
      </TabStrip>
      <Toolbar>
        <ToolCell><Stroke d="M17 9H1.5M8.5 2L1.5 9 8.5 16" /></ToolCell>
        <ToolCell><Stroke d="M1 9H16.5M9.5 2L16.5 9 9.5 16" color="#808080" /></ToolCell>
        <ToolCell><Stroke d="M16.8 9A7.7 7.7 0 1 1 13.5 2.8M15.8 1V5H11.8" /></ToolCell>
        <ToolCell><Stroke d="M2.2 8L9 1.6 15.8 8V16.2H11.4V11.5Q11.4 10.2 10.2 10.2H7.8Q6.6 10.2 6.6 11.5V16.2H2.2z" /></ToolCell>
        <AddressBar>
          <ToolCell $w={36}>
            <Stroke d="M9 8.2V12.6M9 5.6V5.7" sw={1.4}><circle cx="9" cy="9" r="7.6" strokeWidth="1.1" /></Stroke>
          </ToolCell>
          <Url><b>localhost</b>:8080/houseship/housedetails/31</Url>
          <ToolCell $w={36}>
            <Stroke d="M1.5 15L6.5 3.5 11.5 15M3.2 11H9.8M10.5 4.5Q12 6 12 8M12.5 2.5Q15 5 15 8" color="#9a9a9a" />
          </ToolCell>
          <ToolCell $w={36}>
            <Stroke d="M9 15L4.5 16.3 5.3 11 1.5 7.3 6.7 6.5 9 1.8 11.3 6.5 16.5 7.3 15 8.8" color="#9a9a9a">
              <circle cx="13.5" cy="13.3" r="4.4" fill="#a5a5a5" stroke="none" />
              <path d="M13.5 11V15.6M11.2 13.3H15.8" stroke="#2b2b2b" />
            </Stroke>
          </ToolCell>
        </AddressBar>
        <ToolCell $w={58}>
          <Stroke d="M8 14L3.8 16 4.6 11 1 7.3 6 6.5 8.2 2 10 5.8 16.5 6.2M10.5 10H16.5M10.5 14H16.5" />
        </ToolCell>
        <ToolCell $w={32}>
          <Stroke d="M3 13Q1.5 12.5 1.3 11L.8 5.5Q.8 3.5 2.5 3.2L9.5 1.5Q11.5 1.5 12 3.3M6 8Q6 5.500 8.3 5.500H14.5Q17 5.500 17 8V14Q17 16.5 14.5 16.5H8.3Q6 16.5 6 14zM11.5 8V14M8.5 11H14.5" />
        </ToolCell>
        <ToolCell $w={5} />
        <PrivatePill>
          InPrivate
          <svg width="24" height="24" viewBox="0 0 24 24">
            <defs>
              <linearGradient id="face"><stop offset="0" stopColor="#7b7775" /><stop offset="1" stopColor="#c6c2bf" /></linearGradient>
              <clipPath id="disc"><circle cx="12" cy="12" r="12" /></clipPath>
            </defs>
            <circle cx="12" cy="12" r="12" fill="#33302e" />
            <circle cx="12" cy="8.5" r="5" fill="url(#face)" />
            <path d="M3 26Q3 15 11 15T19 26z" fill="#b5b1ae" clipPath="url(#disc)" />
          </svg>
        </PrivatePill>
        <ToolCell $w={48}>
          <svg width="16" height="4" viewBox="0 0 16 4" fill="#f2f2f2">
            <circle cx="2.5" cy="2" r="1.3" /><circle cx="8" cy="2" r="1.3" /><circle cx="13.5" cy="2" r="1.3" />
          </svg>
        </ToolCell>
      </Toolbar>

      <Viewport>
        <Page>
          <Details>
            <Rule $top={37} />
            <Heading>住宿地點</Heading>
            <MapBox>
              <StreetMap />
              <Overlay $x={10} $y={10} $w={176} $h={40}>
                <MapType $on $w={70}>地圖</MapType>
                <MapType $w={106}>衛星檢視</MapType>
              </Overlay>
              <Overlay $x={706} $y={10} $w={40} $h={40}>
                <svg width="18" height="18" viewBox="0 0 18 18" fill="none" stroke="#666" strokeWidth="2.4">
                  <path d="M1.2 6V1.2H6M12 1.2H16.8V6M16.8 12V16.8H12M6 16.8H1.2V12" />
                </svg>
              </Overlay>
              <Overlay $x={706} $y={423} $w={40} $h={40}><Pegman /></Overlay>
              <Overlay $x={706} $y={495} $w={40} $h={81}>
                <ZoomStack>
                  <div><svg width="18" height="18"><path d="M9 0V18M0 9H18" stroke="#666" strokeWidth="3.6" /></svg></div>
                  <hr />
                  <div><svg width="18" height="4"><path d="M0 2H18" stroke="#666" strokeWidth="3.6" /></svg></div>
                </ZoomStack>
              </Overlay>
              <GoogleMark>
                <Letter $c="#4285f4">G</Letter><Letter $c="#ea4335">o</Letter><Letter $c="#fbbc04">o</Letter>
                <Letter $c="#4285f4">g</Letter><Letter $c="#34a853">l</Letter><Letter $c="#ea4335">e</Letter>
              </GoogleMark>
              <Attribution>
                <span>鍵盤快速鍵</span>
                <span>地圖資料 ©2022 Google</span>
                <span>使用條款</span>
                <span>回報地圖錯誤</span>
              </Attribution>
            </MapBox>
            <Rule $top={40} />
            <Heading>房屋規章</Heading>
            <RuleList>
              <RuleItem><Clock />入住時間: 下午&nbsp;<Time $track={0.6}>03:00</Time></RuleItem>
              <RuleItem><Clock />退房時間: 上午&nbsp;<Time $track={-1.2}>11:00</Time></RuleItem>
              <RuleItem><NoSmoking />禁止吸煙</RuleItem>
              <RuleItem><NoPets />禁止攜帶寵物</RuleItem>
            </RuleList>
          </Details>
          <Card>
            <Fields>
              <FieldLabel>入住日期</FieldLabel>
              <Field><Calendar /></Field>
              <FieldLabel>退房日期</FieldLabel>
              <Field><Calendar /></Field>
              <FieldLabel>房客</FieldLabel>
              <Field>1<Unit>人</Unit></Field>
            </Fields>
            <Rule $top={16} />
            <PriceRow>每晚單價<span>$1,328 TWD</span></PriceRow>
            <BookButton>預定房源</BookButton>
          </Card>
        </Page>
        <Scrollbar>
          <ScrollArrow />
          <ScrollThumb />
          <ScrollArrow $down />
        </Scrollbar>
      </Viewport>
    </Window>
  );
}
